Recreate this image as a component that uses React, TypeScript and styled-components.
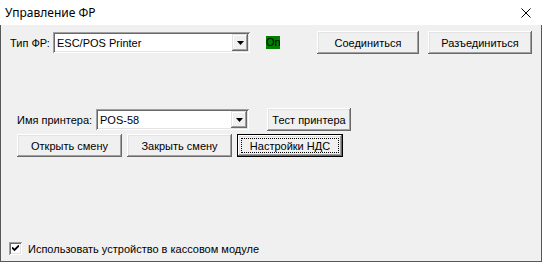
import styled, { createGlobalStyle } from 'styled-components';

const GlobalStyle = createGlobalStyle`
  html, body {
    margin: 0;
    padding: 0;
    background: #ffffff;
  }
  body {
    font-family: 'Liberation Sans', Arial, sans-serif;
    font-size: 11px;
    color: #000;
  }
`;

const Window = styled.div`
  width: 542px;
  height: 262px;
  display: flex;
  flex-direction: column;
  box-sizing: border-box;
`;

const TitleBar = styled.div`
  height: 25px;
  flex: none;
  display: flex;
  align-items: center;
  justify-content: space-between;
  padding: 0 11px 0 5px;
  background: #ffffff;
`;

const Title = styled.span`
  font-family: 'Noto Sans', 'Open Sans', sans-serif;
  font-size: 12px;
  color: #000;
`;

const CloseButton = styled.button`
  display: flex;
  padding: 0;
  border: none;
  background: transparent;
`;

const Body = styled.div`
  flex: 1;
  display: flex;
  flex-direction: column;
  background: #f0f0f0;
  border: 1px solid #575757;
  border-top: none;
`;

const Row = styled.div<{ $top: number; $left: number }>`
  display: flex;
  align-items: center;
  margin-top: ${({ $top }) => $top}px;
  padding-left: ${({ $left }) => $left}px;
`;

const Label = styled.label<{ $w: number }>`
  flex: none;
  width: ${({ $w }) => $w}px;
  white-space: nowrap;
`;

const Combo = styled.div<{ $w: number }>`
  flex: none;
  box-sizing: border-box;
  width: ${({ $w }) => $w}px;
  height: 21px;
  display: flex;
  align-items: center;
  padding: 2px 2px 2px 4px;
  background: #ffffff;
  box-shadow: inset 1px 1px #a0a0a0, inset -1px -1px #ffffff,
    inset 2px 2px #696969, inset -2px -2px #e3e3e3;
`;

const ComboText = styled.span`
  flex: 1;
`;

const ComboArrow = styled.span`
  flex: none;
  width: 16px;
  height: 17px;
  display: flex;
  align-items: center;
  justify-content: center;
  background: #f0f0f0;
  box-shadow: inset -1px -1px #696969, inset 1px 1px #e3e3e3,
    inset -2px -2px #a0a0a0, inset 2px 2px #ffffff;
`;

const Status = styled.span`
  flex: none;
  width: 14px;
  margin-left: 16px;
  overflow: hidden;
  white-space: nowrap;
  line-height: 13px;
  background: #008000;
  color: #000;
`;

const Button = styled.button<{ $w: number; $gap?: number; $default?: boolean }>`
  flex: none;
  box-sizing: border-box;
  width: ${({ $w }) => $w}px;
  height: 23px;
  margin-left: ${({ $gap = 0 }) => $gap}px;
  padding: 0;
  border: none;
  background: #f0f0f0;
  font-family: 'Liberation Sans', Arial, sans-serif;
  font-size: 11px;
  color: #000;
  box-shadow: ${({ $default }) =>
    $default
      ? 'inset 0 0 0 1px #000, inset -2px -2px #696969, inset 2px 2px #ffffff, inset -3px -3px #a0a0a0, inset 3px 3px #e3e3e3'
      : 'inset -1px -1px #696969, inset 1px 1px #ffffff, inset -2px -2px #a0a0a0, inset 2px 2px #e3e3e3'};
  outline: ${({ $default }) => ($default ? '1px dotted #000' : 'none')};
  outline-offset: -5px;
`;

const CheckRow = styled.label`
  display: flex;
  align-items: center;
  margin-top: 85px;
  padding-left: 8px;
  gap: 6px;
`;

const CheckBox = styled.span`
  flex: none;
  box-sizing: border-box;
  width: 13px;
  height: 13px;
  display: flex;
  align-items: center;
  justify-content: center;
  background: #ffffff;
  box-shadow: inset 1px 1px #a0a0a0, inset -1px -1px #ffffff,
    inset 2px 2px #696969, inset -2px -2px #e3e3e3;
`;

const DownArrow = () => (
  <svg width="7" height="4" viewBox="0 0 7 4">
    <path d="M0 0h7L3.5 4z" fill="#000" />
  </svg>
);

export default function App() {
  return (
    <Window>
      <GlobalStyle />
      <TitleBar>
        <Title>Управление ФР</Title>
        <CloseButton aria-label="Закрыть">
          <svg width="10" height="10" viewBox="0 0 10 10">
            <path d="M0.5 0.5l9 9M9.5 0.5l-9 9" stroke="#000" strokeWidth="1" />
          </svg>
        </CloseButton>
      </TitleBar>
      <Body>
        <Row $top={6} $left={9}>
          <Label $w={43}>Тип ФР:</Label>
          <Combo $w={197}>
            <ComboText>ESC/POS Printer</ComboText>
            <ComboArrow>
              <DownArrow />
            </ComboArrow>
          </Combo>
          <Status>On</Status>
          <Button $w={102} $gap={37}>Соединиться</Button>
          <Button $w={104} $gap={9}>Разъединиться</Button>
        </Row>

        <Row $top={54} $left={16}>
          <Label $w={79}>Имя принтера:</Label>
          <Combo $w={153}>
            <ComboText>POS-58</ComboText>
            <ComboArrow>
              <DownArrow />
            </ComboArrow>
          </Combo>
          <Button $w={84} $gap={18}>Тест принтера</Button>
        </Row>

        <Row $top={3} $left={16}>
          <Button $w={105}>Открыть смену</Button>
          <Button $w={105} $gap={5}>Закрыть смену</Button>
          <Button $w={106} $gap={5} $default>
            Настройки НДС
          </Button>
        </Row>

        <CheckRow>
          <CheckBox>
            <svg width="7" height="7" viewBox="0 0 7 7">
              <path d="M0 2.5l2.5 2.5L7 0.5" stroke="#000" strokeWidth="1.8" fill="none" />
            </svg>
          </CheckBox>
          Использовать устройство в кассовом модуле
        </CheckRow>
      </Body>
    </Window>
  );
}
